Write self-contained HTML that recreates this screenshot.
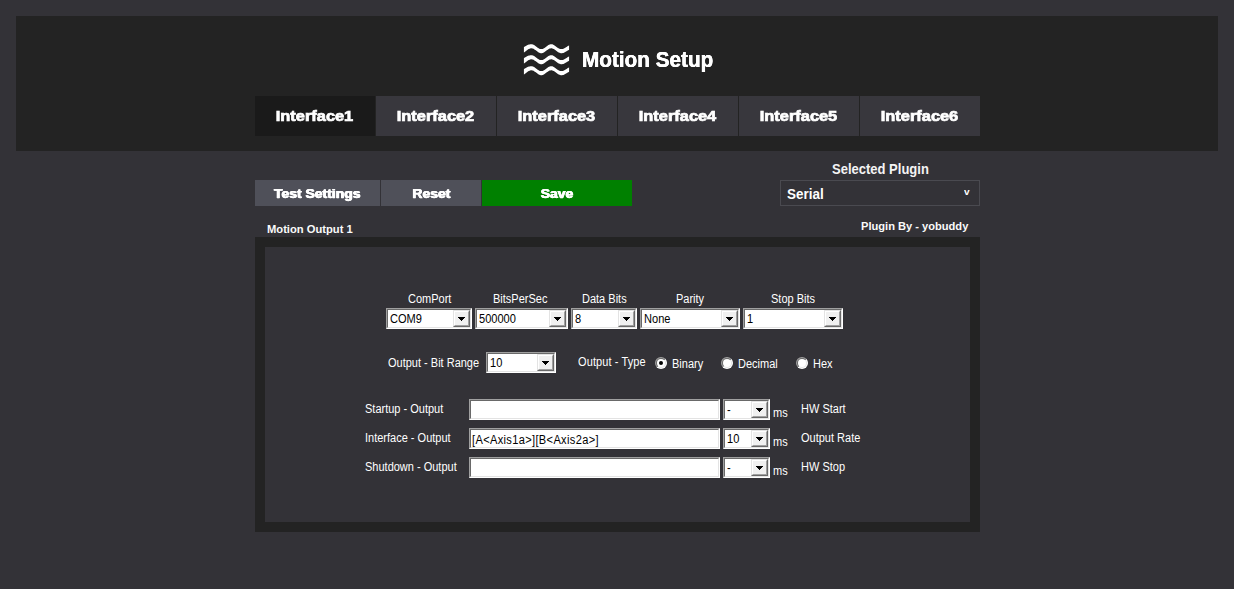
<!DOCTYPE html>
<html lang="en">
<head>
<meta charset="utf-8">
<title>Motion Setup</title>
<style>
*{box-sizing:border-box;margin:0;padding:0}
html,body{width:1234px;height:589px;overflow:hidden;background:#333237}
body{position:relative;font-family:"Liberation Sans",sans-serif;color:#fff}
.t{position:absolute;white-space:nowrap;line-height:1}
header{position:absolute;left:16px;top:16px;width:1202px;height:135px;background:#232323}
h1{will-change:transform;position:absolute;left:566.3px;top:32.8px;font-size:21.6px;text-shadow:0.2px 0 0 #fff,-0.2px 0 0 #fff;font-weight:bold;line-height:1;white-space:nowrap;color:#fff}
#logo{position:absolute;left:504px;top:24px}
nav{position:absolute;left:239px;top:80px;width:725px;height:40px;background:#232323}
nav a{position:absolute;top:0;width:120px;height:40px;background:#38373d;color:#fff;text-decoration:none;text-align:center}
nav a.on{background:#1a1a1a}
.blk{display:inline-block;font-weight:bold;white-space:nowrap;-webkit-text-stroke:0.3px #fff;text-shadow:0.4px 0 0 #fff,-0.4px 0 0 #fff;transform-origin:50% 50%}
.g{display:block;will-change:transform}
nav a .blk{font-size:14.2px;line-height:40px;transform:scaleX(1.155);position:relative;left:-0.3px;-webkit-text-stroke:0.72px #fff;text-shadow:none}
.btn{position:absolute;top:180px;height:26px;background:#4f5059;color:#fff;text-align:center;border:0;font-family:inherit;cursor:pointer}
.btn .blk{font-size:12px;line-height:26px;transform:scaleX(1.16);-webkit-text-stroke:0.25px #fff;text-shadow:0.4px 0 0 #fff,-0.4px 0 0 #fff;position:relative;top:1px}
#save{background:#008000}
#plugsel{position:absolute;left:780px;top:180px;width:200px;height:26px;border:1px solid #4a4a50;background:#333237}
#outer{position:absolute;left:255px;top:237px;width:725px;height:295px;background:#232323}
#inner{position:absolute;left:10px;top:10px;width:705px;height:275px;background:#333237}
.lbl{position:absolute;white-space:nowrap;font-size:12.5px;line-height:14px;color:#fff;transform:scaleX(.88);transform-origin:0 0}
.cb{position:absolute;height:21px;background:#fff;border:1px solid;border-color:#a0a0a0 #fff #fff #a0a0a0;color:#000}
.cb:before{content:"";position:absolute;left:0;top:0;right:0;bottom:0;border:1px solid;border-color:#696969 #e3e3e3 #e3e3e3 #696969}
.cb .v{position:absolute;left:2.5px;top:3px;font-size:12.5px;line-height:14px;white-space:nowrap;transform:scaleX(.885);transform-origin:0 0}
.cb .dd{position:absolute;right:1px;top:1px;width:17px;height:17px;background:#f0f0f0;border:1px solid;border-color:#e3e3e3 #696969 #696969 #e3e3e3}
.cb .dd:before{content:"";position:absolute;left:0;top:0;right:0;bottom:0;border:1px solid;border-color:#fff #a0a0a0 #a0a0a0 #fff}
.cb .dd:after{content:"";position:absolute;left:4px;top:6px;width:7px;height:4px;background:linear-gradient(#000,#000) 0 0/7px 1px no-repeat,linear-gradient(#000,#000) 1px 1px/5px 1px no-repeat,linear-gradient(#000,#000) 2px 2px/3px 1px no-repeat,linear-gradient(#000,#000) 3px 3px/1px 1px no-repeat}
.tb{position:absolute;height:21px;background:#fff;border:1px solid;border-color:#a0a0a0 #fff #fff #a0a0a0;color:#000}
.tb:before{content:"";position:absolute;left:0;top:0;right:0;bottom:0;border:1px solid;border-color:#696969 #e3e3e3 #e3e3e3 #696969}
.tb .v{position:absolute;left:2px;top:4px;font-size:12.5px;line-height:14px;white-space:nowrap;letter-spacing:0.39px;transform:scaleX(.885);transform-origin:0 0}
.rad{position:absolute;width:12px;height:12px}
</style>
</head>
<body>
<header>
  <svg id="logo" width="52" height="38" viewBox="520 40 52 38" aria-hidden="true">
    <defs><clipPath id="wc"><rect x="523.7" y="40" width="45.7" height="38"/></clipPath></defs>
    <g clip-path="url(#wc)" fill="#fff">
      <path d="M523.7 47.14 L524.4 46.77 L525.0 46.40 L525.7 46.04 L526.3 45.69 L527.0 45.36 L527.6 45.06 L528.2 44.80 L528.9 44.58 L529.6 44.41 L530.2 44.29 L530.9 44.22 L531.5 44.21 L532.2 44.30 L532.8 44.48 L533.5 44.75 L534.1 45.11 L534.8 45.53 L535.4 45.99 L536.1 46.49 L536.7 46.99 L537.4 47.48 L538.0 47.93 L538.7 48.33 L539.3 48.66 L540.0 48.91 L540.6 49.06 L541.2 49.11 L541.9 49.06 L542.6 48.91 L543.2 48.66 L543.9 48.33 L544.5 47.93 L545.2 47.48 L545.8 46.99 L546.5 46.49 L547.1 45.99 L547.8 45.53 L548.4 45.11 L549.1 44.75 L549.7 44.48 L550.4 44.30 L551.0 44.21 L551.7 44.23 L552.3 44.36 L553.0 44.57 L553.6 44.88 L554.2 45.26 L554.9 45.70 L555.6 46.18 L556.2 46.68 L556.9 47.18 L557.5 47.66 L558.2 48.09 L558.8 48.47 L559.5 48.77 L560.1 48.98 L560.8 49.09 L561.4 49.10 L562.1 49.04 L562.7 48.90 L563.4 48.69 L564.0 48.43 L564.7 48.11 L565.3 47.74 L566.0 47.34 L566.6 46.92 L567.2 46.50 L567.9 46.07 L568.6 45.67 L569.2 45.30 L569.2 49.70 L568.6 50.05 L567.9 50.43 L567.2 50.82 L566.6 51.23 L566.0 51.62 L565.3 51.99 L564.7 52.34 L564.0 52.63 L563.4 52.88 L562.7 53.06 L562.1 53.17 L561.4 53.21 L560.8 53.19 L560.1 53.08 L559.5 52.87 L558.8 52.57 L558.2 52.19 L557.5 51.76 L556.9 51.28 L556.2 50.78 L555.6 50.28 L554.9 49.80 L554.2 49.36 L553.6 48.98 L553.0 48.67 L552.3 48.46 L551.7 48.33 L551.0 48.31 L550.4 48.40 L549.7 48.58 L549.1 48.85 L548.4 49.21 L547.8 49.63 L547.1 50.09 L546.5 50.59 L545.8 51.09 L545.2 51.58 L544.5 52.03 L543.9 52.43 L543.2 52.76 L542.6 53.01 L541.9 53.16 L541.2 53.21 L540.6 53.16 L540.0 53.01 L539.3 52.76 L538.7 52.43 L538.0 52.03 L537.4 51.58 L536.7 51.09 L536.1 50.59 L535.4 50.09 L534.8 49.63 L534.1 49.21 L533.5 48.85 L532.8 48.58 L532.2 48.40 L531.5 48.31 L530.9 48.33 L530.2 48.46 L529.6 48.67 L528.9 48.98 L528.2 49.36 L527.6 49.80 L527.0 50.28 L526.3 50.78 L525.7 51.28 L525.0 51.76 L524.4 52.19 L523.7 52.57Z"/>
      <path d="M523.7 58.14 L524.4 57.77 L525.0 57.40 L525.7 57.04 L526.3 56.69 L527.0 56.36 L527.6 56.06 L528.2 55.80 L528.9 55.58 L529.6 55.41 L530.2 55.29 L530.9 55.22 L531.5 55.21 L532.2 55.30 L532.8 55.48 L533.5 55.75 L534.1 56.11 L534.8 56.53 L535.4 56.99 L536.1 57.49 L536.7 57.99 L537.4 58.48 L538.0 58.93 L538.7 59.33 L539.3 59.66 L540.0 59.91 L540.6 60.06 L541.2 60.11 L541.9 60.06 L542.6 59.91 L543.2 59.66 L543.9 59.33 L544.5 58.93 L545.2 58.48 L545.8 57.99 L546.5 57.49 L547.1 56.99 L547.8 56.53 L548.4 56.11 L549.1 55.75 L549.7 55.48 L550.4 55.30 L551.0 55.21 L551.7 55.23 L552.3 55.36 L553.0 55.57 L553.6 55.88 L554.2 56.26 L554.9 56.70 L555.6 57.18 L556.2 57.68 L556.9 58.18 L557.5 58.66 L558.2 59.09 L558.8 59.47 L559.5 59.77 L560.1 59.98 L560.8 60.09 L561.4 60.10 L562.1 60.04 L562.7 59.90 L563.4 59.69 L564.0 59.43 L564.7 59.11 L565.3 58.74 L566.0 58.34 L566.6 57.92 L567.2 57.50 L567.9 57.07 L568.6 56.67 L569.2 56.30 L569.2 60.70 L568.6 61.05 L567.9 61.43 L567.2 61.82 L566.6 62.23 L566.0 62.62 L565.3 62.99 L564.7 63.34 L564.0 63.63 L563.4 63.88 L562.7 64.06 L562.1 64.17 L561.4 64.21 L560.8 64.19 L560.1 64.08 L559.5 63.87 L558.8 63.57 L558.2 63.19 L557.5 62.76 L556.9 62.28 L556.2 61.78 L555.6 61.28 L554.9 60.80 L554.2 60.36 L553.6 59.98 L553.0 59.67 L552.3 59.46 L551.7 59.33 L551.0 59.31 L550.4 59.40 L549.7 59.58 L549.1 59.85 L548.4 60.21 L547.8 60.63 L547.1 61.09 L546.5 61.59 L545.8 62.09 L545.2 62.58 L544.5 63.03 L543.9 63.43 L543.2 63.76 L542.6 64.01 L541.9 64.16 L541.2 64.21 L540.6 64.16 L540.0 64.01 L539.3 63.76 L538.7 63.43 L538.0 63.03 L537.4 62.58 L536.7 62.09 L536.1 61.59 L535.4 61.09 L534.8 60.63 L534.1 60.21 L533.5 59.85 L532.8 59.58 L532.2 59.40 L531.5 59.31 L530.9 59.33 L530.2 59.46 L529.6 59.67 L528.9 59.98 L528.2 60.36 L527.6 60.80 L527.0 61.28 L526.3 61.78 L525.7 62.28 L525.0 62.76 L524.4 63.19 L523.7 63.57Z"/>
      <path d="M523.7 69.14 L524.4 68.77 L525.0 68.40 L525.7 68.04 L526.3 67.69 L527.0 67.36 L527.6 67.06 L528.2 66.80 L528.9 66.58 L529.6 66.41 L530.2 66.29 L530.9 66.22 L531.5 66.21 L532.2 66.30 L532.8 66.48 L533.5 66.75 L534.1 67.11 L534.8 67.53 L535.4 67.99 L536.1 68.49 L536.7 68.99 L537.4 69.48 L538.0 69.93 L538.7 70.33 L539.3 70.66 L540.0 70.91 L540.6 71.06 L541.2 71.11 L541.9 71.06 L542.6 70.91 L543.2 70.66 L543.9 70.33 L544.5 69.93 L545.2 69.48 L545.8 68.99 L546.5 68.49 L547.1 67.99 L547.8 67.53 L548.4 67.11 L549.1 66.75 L549.7 66.48 L550.4 66.30 L551.0 66.21 L551.7 66.23 L552.3 66.36 L553.0 66.57 L553.6 66.88 L554.2 67.26 L554.9 67.70 L555.6 68.18 L556.2 68.68 L556.9 69.18 L557.5 69.66 L558.2 70.09 L558.8 70.47 L559.5 70.77 L560.1 70.98 L560.8 71.09 L561.4 71.10 L562.1 71.04 L562.7 70.90 L563.4 70.69 L564.0 70.43 L564.7 70.11 L565.3 69.74 L566.0 69.34 L566.6 68.92 L567.2 68.50 L567.9 68.07 L568.6 67.67 L569.2 67.30 L569.2 71.70 L568.6 72.05 L567.9 72.43 L567.2 72.82 L566.6 73.23 L566.0 73.62 L565.3 73.99 L564.7 74.34 L564.0 74.63 L563.4 74.88 L562.7 75.06 L562.1 75.17 L561.4 75.21 L560.8 75.19 L560.1 75.08 L559.5 74.87 L558.8 74.57 L558.2 74.19 L557.5 73.76 L556.9 73.28 L556.2 72.78 L555.6 72.28 L554.9 71.80 L554.2 71.36 L553.6 70.98 L553.0 70.67 L552.3 70.46 L551.7 70.33 L551.0 70.31 L550.4 70.40 L549.7 70.58 L549.1 70.85 L548.4 71.21 L547.8 71.63 L547.1 72.09 L546.5 72.59 L545.8 73.09 L545.2 73.58 L544.5 74.03 L543.9 74.43 L543.2 74.76 L542.6 75.01 L541.9 75.16 L541.2 75.21 L540.6 75.16 L540.0 75.01 L539.3 74.76 L538.7 74.43 L538.0 74.03 L537.4 73.58 L536.7 73.09 L536.1 72.59 L535.4 72.09 L534.8 71.63 L534.1 71.21 L533.5 70.85 L532.8 70.58 L532.2 70.40 L531.5 70.31 L530.9 70.33 L530.2 70.46 L529.6 70.67 L528.9 70.98 L528.2 71.36 L527.6 71.80 L527.0 72.28 L526.3 72.78 L525.7 73.28 L525.0 73.76 L524.4 74.19 L523.7 74.57Z"/>
    </g>
  </svg>
  <h1><span style="display:inline-block;transform:scaleX(.96);transform-origin:0 50%">Motion Setup</span></h1>
  <nav>
    <a class="on" style="left:0"><span class="g"><span class="blk">Interface1</span></span></a>
    <a style="left:121px"><span class="g"><span class="blk">Interface2</span></span></a>
    <a style="left:242px"><span class="g"><span class="blk">Interface3</span></span></a>
    <a style="left:363px"><span class="g"><span class="blk">Interface4</span></span></a>
    <a style="left:484px"><span class="g"><span class="blk">Interface5</span></span></a>
    <a style="left:605px"><span class="g"><span class="blk">Interface6</span></span></a>
  </nav>
</header>

<button class="btn" style="left:255px;width:125px"><span class="g"><span class="blk">Test Settings</span></span></button>
<button class="btn" style="left:381px;width:100px"><span class="g"><span class="blk">Reset</span></span></button>
<button class="btn" id="save" style="left:482px;width:150px"><span class="g"><span class="blk">Save</span></span></button>

<div class="t" style="left:831.6px;top:162px;font-size:14px;font-weight:bold;color:#f4f4f4;transform:scaleX(.929);transform-origin:0 0">Selected Plugin</div>
<div id="plugsel">
  <span class="t" style="left:6px;top:5.7px;font-size:14px;font-weight:bold;transform:scaleX(.96);transform-origin:0 0">Serial</span>
  <span class="t" style="left:183px;top:7px;font-size:9.3px;font-weight:bold;transform:scaleX(1.08);transform-origin:0 0">v</span>
</div>

<div class="t" style="left:266.8px;top:223px;font-size:11.7px;font-weight:bold;color:#fafafa;transform:scaleX(.957);transform-origin:0 0">Motion Output 1</div>
<div class="t" style="left:861px;top:220px;font-size:11.7px;font-weight:bold;color:#fafafa;transform:scaleX(.95);transform-origin:0 0">Plugin By - yobuddy</div>

<div id="outer"><div id="inner"></div></div>

<!-- row 1 -->
<div class="lbl" style="left:408.4px;top:292px">ComPort</div>
<div class="lbl" style="left:493.4px;top:292px">BitsPerSec</div>
<div class="lbl" style="left:581.6px;top:292px">Data Bits</div>
<div class="lbl" style="left:675.9px;top:292px">Parity</div>
<div class="lbl" style="left:771px;top:292px">Stop Bits</div>
<div class="cb" style="left:386px;top:308px;width:86px"><span class="v">COM9</span><i class="dd"></i></div>
<div class="cb" style="left:475px;top:308px;width:93px"><span class="v">500000</span><i class="dd"></i></div>
<div class="cb" style="left:571px;top:308px;width:66px"><span class="v">8</span><i class="dd"></i></div>
<div class="cb" style="left:640px;top:308px;width:100px"><span class="v">None</span><i class="dd"></i></div>
<div class="cb" style="left:743px;top:308px;width:100px"><span class="v">1</span><i class="dd"></i></div>

<!-- row 2 -->
<div class="lbl" style="left:388.3px;top:356px">Output - Bit Range</div>
<div class="cb" style="left:486px;top:352px;width:70px"><span class="v">10</span><i class="dd"></i></div>
<div class="lbl" style="left:577.9px;top:355px;letter-spacing:.12px">Output - Type</div>
<svg class="rad" style="left:655px;top:357px" viewBox="0 0 12 12" aria-hidden="true"><defs><linearGradient id="ro1" x1="0" y1="0" x2="1" y2="1"><stop offset="0.5" stop-color="#a0a0a0"/><stop offset="0.5" stop-color="#ffffff"/></linearGradient><linearGradient id="ri1" x1="0" y1="0" x2="1" y2="1"><stop offset="0.5" stop-color="#696969"/><stop offset="0.5" stop-color="#e3e3e3"/></linearGradient></defs><circle cx="6" cy="6" r="6" fill="url(#ro1)"/><circle cx="6" cy="6" r="5" fill="url(#ri1)"/><circle cx="6" cy="6" r="4" fill="#fff"/><circle cx="6" cy="6" r="2" fill="#000"/></svg>
<div class="lbl" style="left:672.0px;top:357px">Binary</div>
<svg class="rad" style="left:721px;top:357px" viewBox="0 0 12 12" aria-hidden="true"><defs><linearGradient id="ro2" x1="0" y1="0" x2="1" y2="1"><stop offset="0.5" stop-color="#a0a0a0"/><stop offset="0.5" stop-color="#ffffff"/></linearGradient><linearGradient id="ri2" x1="0" y1="0" x2="1" y2="1"><stop offset="0.5" stop-color="#696969"/><stop offset="0.5" stop-color="#e3e3e3"/></linearGradient></defs><circle cx="6" cy="6" r="6" fill="url(#ro2)"/><circle cx="6" cy="6" r="5" fill="url(#ri2)"/><circle cx="6" cy="6" r="4" fill="#fff"/></svg>
<div class="lbl" style="left:738.0px;top:357px">Decimal</div>
<svg class="rad" style="left:796px;top:357px" viewBox="0 0 12 12" aria-hidden="true"><defs><linearGradient id="ro3" x1="0" y1="0" x2="1" y2="1"><stop offset="0.5" stop-color="#a0a0a0"/><stop offset="0.5" stop-color="#ffffff"/></linearGradient><linearGradient id="ri3" x1="0" y1="0" x2="1" y2="1"><stop offset="0.5" stop-color="#696969"/><stop offset="0.5" stop-color="#e3e3e3"/></linearGradient></defs><circle cx="6" cy="6" r="6" fill="url(#ro3)"/><circle cx="6" cy="6" r="5" fill="url(#ri3)"/><circle cx="6" cy="6" r="4" fill="#fff"/></svg>
<div class="lbl" style="left:812.9px;top:357px">Hex</div>

<!-- rows 3-5 -->
<div class="lbl" style="left:365.2px;top:402px">Startup - Output</div>
<div class="lbl" style="left:365.2px;top:431px">Interface - Output</div>
<div class="lbl" style="left:365.2px;top:460px">Shutdown - Output</div>
<div class="tb" style="left:469px;top:399px;width:251px"><span class="v"></span></div>
<div class="tb" style="left:469px;top:428px;width:251px"><span class="v">[A&lt;Axis1a&gt;][B&lt;Axis2a&gt;]</span></div>
<div class="tb" style="left:469px;top:457px;width:251px"><span class="v"></span></div>
<div class="cb" style="left:723px;top:399px;width:47px"><span class="v">-</span><i class="dd"></i></div>
<div class="cb" style="left:723px;top:428px;width:47px"><span class="v">10</span><i class="dd"></i></div>
<div class="cb" style="left:723px;top:457px;width:47px"><span class="v">-</span><i class="dd"></i></div>
<div class="lbl" style="left:773.1px;top:406px">ms</div>
<div class="lbl" style="left:773.1px;top:435px">ms</div>
<div class="lbl" style="left:773.1px;top:464px">ms</div>
<div class="lbl" style="left:801.2px;top:402px">HW Start</div>
<div class="lbl" style="left:801.2px;top:431px">Output Rate</div>
<div class="lbl" style="left:801.2px;top:460px">HW Stop</div>
</body>
</html>
